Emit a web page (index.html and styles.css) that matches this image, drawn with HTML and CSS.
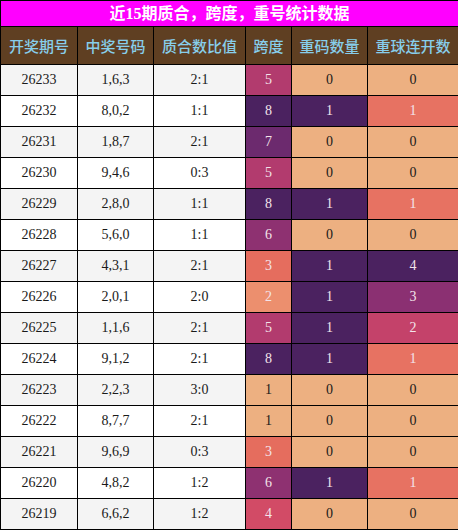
FILE: index.html
```html
<!DOCTYPE html>
<html lang="zh-CN">
<head>
    <meta charset="UTF-8">
    <title>近15期质合，跨度，重号统计数据</title>
    <link rel="stylesheet" href="styles.css">
</head>
<body>
    <table class="stats">
        <colgroup>
            <col class="c-issue"><col class="c-num"><col class="c-ratio">
            <col class="c-span"><col class="c-rep"><col class="c-con">
        </colgroup>
        <thead>
            <tr><th class="title" colspan="6">近15期质合，跨度，重号统计数据</th></tr>
            <tr class="head">
                <th>开奖期号</th><th>中奖号码</th><th>质合数比值</th>
                <th>跨度</th><th>重码数量</th><th>重球连开数</th>
            </tr>
        </thead>
        <tbody>
            <tr><td>26233</td><td>1,6,3</td><td>2:1</td><td class="s5">5</td><td class="r0">0</td><td class="k0">0</td></tr>
            <tr><td>26232</td><td>8,0,2</td><td>1:1</td><td class="s8">8</td><td class="r1">1</td><td class="k1">1</td></tr>
            <tr><td>26231</td><td>1,8,7</td><td>2:1</td><td class="s7">7</td><td class="r0">0</td><td class="k0">0</td></tr>
            <tr><td>26230</td><td>9,4,6</td><td>0:3</td><td class="s5">5</td><td class="r0">0</td><td class="k0">0</td></tr>
            <tr><td>26229</td><td>2,8,0</td><td>1:1</td><td class="s8">8</td><td class="r1">1</td><td class="k1">1</td></tr>
            <tr><td>26228</td><td>5,6,0</td><td>1:1</td><td class="s6">6</td><td class="r0">0</td><td class="k0">0</td></tr>
            <tr><td>26227</td><td>4,3,1</td><td>2:1</td><td class="s3">3</td><td class="r1">1</td><td class="k4">4</td></tr>
            <tr><td>26226</td><td>2,0,1</td><td>2:0</td><td class="s2">2</td><td class="r1">1</td><td class="k3">3</td></tr>
            <tr><td>26225</td><td>1,1,6</td><td>2:1</td><td class="s5">5</td><td class="r1">1</td><td class="k2">2</td></tr>
            <tr><td>26224</td><td>9,1,2</td><td>2:1</td><td class="s8">8</td><td class="r1">1</td><td class="k1">1</td></tr>
            <tr><td>26223</td><td>2,2,3</td><td>3:0</td><td class="s1">1</td><td class="r0">0</td><td class="k0">0</td></tr>
            <tr><td>26222</td><td>8,7,7</td><td>2:1</td><td class="s1">1</td><td class="r0">0</td><td class="k0">0</td></tr>
            <tr><td>26221</td><td>9,6,9</td><td>0:3</td><td class="s3">3</td><td class="r0">0</td><td class="k0">0</td></tr>
            <tr><td>26220</td><td>4,8,2</td><td>1:2</td><td class="s6">6</td><td class="r1">1</td><td class="k1">1</td></tr>
            <tr><td>26219</td><td>6,6,2</td><td>1:2</td><td class="s4">4</td><td class="r0">0</td><td class="k0">0</td></tr>
        </tbody>
    </table>
</body>
</html>
```

FILE: styles.css
```css
body {
    margin: 0;
    background: #ffffff;
    font-family: "Liberation Serif", "Noto Sans CJK SC", serif;
}
.stats {
    width: 458px;
    border-collapse: collapse;
    table-layout: fixed;
}
.c-issue { width: 77px; }
.c-num { width: 76px; }
.c-ratio { width: 92px; }
.c-span { width: 46px; }
.c-rep { width: 76px; }
.c-con { width: 91px; }
.stats th,
.stats td {
    border: 1px solid #000;
    padding: 0;
    text-align: center;
}
.title {
    height: 25px;
    background: #ff00ff;
    color: #fff;
    font-size: 16px;
    font-weight: bold;
    line-height: 24px;
}
.head th {
    height: 37px;
    background: #5f3f22;
    color: #87ceeb;
    font-family: "Noto Sans CJK SC", sans-serif;
    font-size: 15px;
    font-weight: 500;
}
.stats td {
    height: 30px;
    font-size: 14px;
    color: #1a1a1a;
}
tbody tr:nth-child(odd) { background: #f4f4f4; }
tbody tr:nth-child(even) { background: #ffffff; }

/* 跨度 */
.s1 { background: #edb081; }
.s2 { background: #ec8f6e; }
.s3 { background: #e56d5e; }
.s4 { background: #d24b66; }
.s5 { background: #b23b6e; }
.s6 { background: #8e3171; }
.s7 { background: #6c2a6e; }
.s8 { background: #4b2260; }
/* 重码数量 */
.r0 { background: #edb081; }
.r1 { background: #4b2260; }
/* 重球连开数 */
.k0 { background: #edb081; }
.k1 { background: #e77262; }
.k2 { background: #c4426a; }
.k3 { background: #8b3072; }
.k4 { background: #4b2260; }

/* 深色格子用浅色字 */
.stats td.s2, .stats td.s3, .stats td.s4, .stats td.s5,
.stats td.s6, .stats td.s7, .stats td.s8,
.stats td.r1, .stats td.k1, .stats td.k2, .stats td.k3, .stats td.k4 {
    color: #f3e4ea;
}
```
